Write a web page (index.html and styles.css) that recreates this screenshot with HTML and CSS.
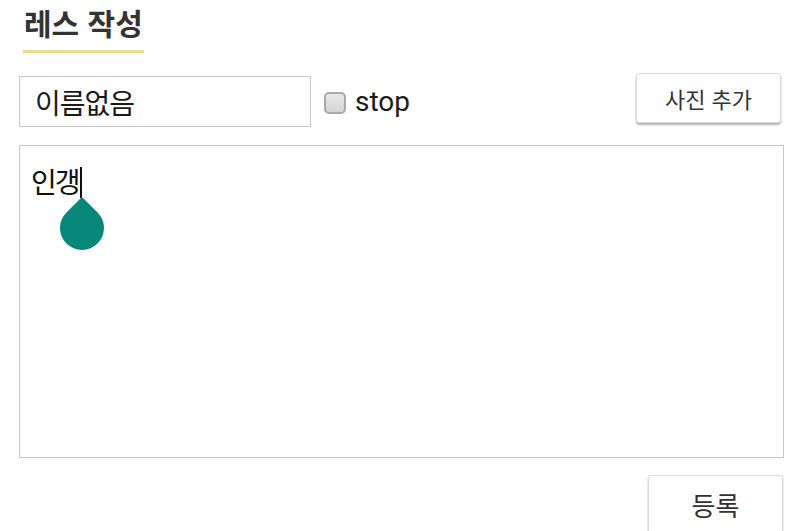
FILE: index.html
```html
<!DOCTYPE html>
<html lang="ko">
<head>
    <meta charset="UTF-8">
    <meta name="viewport" content="width=device-width, initial-scale=1.0">
    <title>레스 작성</title>
    <link rel="stylesheet" href="styles.css">
</head>
<body>
    <header class="tabs">
        <h2 class="tab-title">레스 작성</h2>
    </header>

    <form class="write-form">
        <div class="name-row">
            <input class="name-input" type="text" value="이름없음">
            <label class="stop-label">
                <span class="check-box"></span>
                <span>stop</span>
            </label>
            <button type="button" class="btn btn-photo">사진 추가</button>
        </div>

        <div class="content-box">
            <span class="content-text">인갱</span><span class="caret"></span>
            <span class="caret-handle"></span>
        </div>

        <div class="submit-row">
            <button type="button" class="btn btn-submit">등록</button>
        </div>
    </form>
</body>
</html>
```

FILE: styles.css
```css
/* write form */
body {
    margin: 0;
    padding: 0;
    background-color: #fff;
    font-family: "Noto Sans CJK KR", Roboto, sans-serif;
    color: #222;
}

.tabs {
    padding: 0 0 0 23px;
}

.tab-title {
    display: inline-block;
    margin: 0;
    padding: 2px 1px 8px 1px;
    font-size: 30px;
    line-height: 40px;
    font-weight: bold;
    color: #333;
    border-bottom: 3px solid #eddb8a;
}

.name-row {
    display: flex;
    align-items: center;
    padding: 0 19px;
    margin-top: 20px;
}

.name-input {
    box-sizing: border-box;
    width: 292px;
    height: 51px;
    margin: 3px 0 0 0;
    padding: 0 15px;
    border: 1px solid #c8c8c8;
    font-family: "Noto Sans CJK KR", sans-serif;
    font-size: 28px;
    letter-spacing: -1px;
    color: #1a1a1a;
    outline: none;
}

.stop-label {
    display: flex;
    align-items: center;
    margin: 3px 0 0 13px;
    font-family: Roboto, sans-serif;
    font-size: 28px;
    color: #1a1a1a;
}

.check-box {
    box-sizing: border-box;
    width: 22px;
    height: 22px;
    margin-right: 9px;
    margin-top: 2px;
    border: 2px solid #a9a9a9;
    border-radius: 5px;
    background: linear-gradient(#e9e9e9, #d4d4d4);
}

.btn {
    box-sizing: border-box;
    background-color: #fff;
    border: 1px solid #dcdcdc;
    border-radius: 3px;
    box-shadow: 0 2px 2px rgba(0, 0, 0, 0.3);
    font-family: "Noto Sans CJK KR", sans-serif;
    color: #333;
    cursor: pointer;
}

.btn-photo {
    margin-left: auto;
    margin-top: -4px;
    width: 145px;
    height: 50px;
    font-size: 22px;
}

.content-box {
    position: relative;
    box-sizing: border-box;
    height: 313px;
    margin: 18px 16px 0 19px;
    padding: 16px 11px;
    border: 1px solid #c8c8c8;
    font-size: 28px;
    line-height: 38px;
    letter-spacing: -2px;
    color: #111;
}

.caret {
    display: inline-block;
    width: 2px;
    height: 31px;
    margin-left: 1px;
    vertical-align: -5px;
    background-color: #111;
}

/* selection handle under the caret */
.caret-handle {
    position: absolute;
    left: 40px;
    top: 60px;
    width: 44px;
    height: 44px;
    background-color: #07867a;
    border-radius: 0 50% 50% 50%;
    transform: rotate(45deg);
}

.submit-row {
    display: flex;
    justify-content: flex-end;
    padding-right: 17px;
    margin-top: 17px;
}

.btn-submit {
    width: 135px;
    height: 58px;
    font-size: 26px;
}
```
